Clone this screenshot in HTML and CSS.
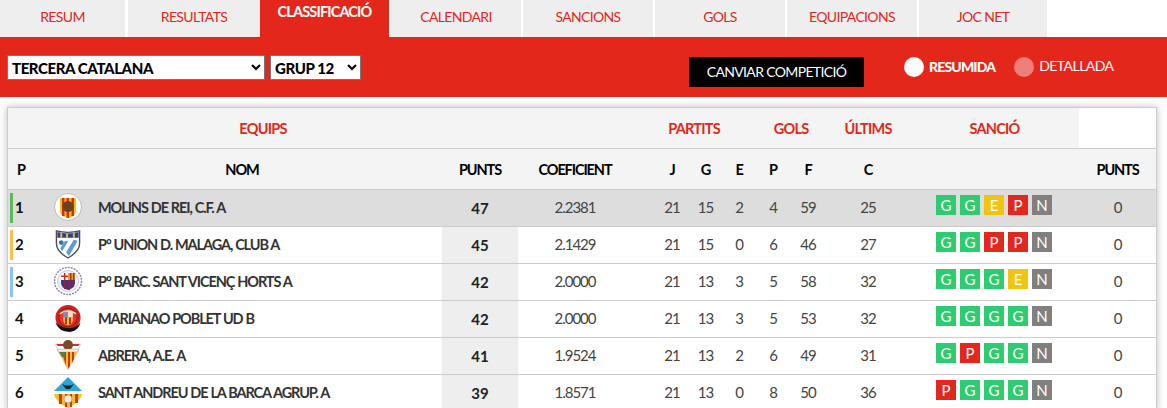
FILE: index.html
```html
<!DOCTYPE html>
<html lang="ca">
<head>
<meta charset="utf-8">
<title>Classificació</title>
<link rel="stylesheet" href="styles.css">
</head>
<body>
<nav class="tabs">
  <a class="tab t1">RESUM</a><a class="tab t2b">RESULTATS</a><a class="tab t3 active">CLASSIFICACIÓ</a><a class="tab">CALENDARI</a><a class="tab">SANCIONS</a><a class="tab">GOLS</a><a class="tab">EQUIPACIONS</a><a class="tab t4">JOC NET</a>
</nav>
<section class="filters">
  <select class="sel sel-comp"><option>TERCERA CATALANA</option></select>
  <select class="sel sel-group"><option>GRUP 12</option></select>
  <button class="change">CANVIAR COMPETICIÓ</button>
  <span class="dot on"></span><span class="mode bold">RESUMIDA</span>
  <span class="dot off"></span><span class="mode light">DETALLADA</span>
</section>
<main class="card">
<table class="standings">
  <colgroup>
    <col class="c-p"><col class="c-logo"><col class="c-name"><col class="c-pts"><col class="c-coef"><col class="c-j"><col class="c-g"><col class="c-e"><col class="c-pp"><col class="c-f"><col class="c-c"><col class="c-form"><col class="c-san">
  </colgroup>
  <thead>
    <tr class="groups">
      <th colspan="4">EQUIPS</th><th></th><th colspan="3">PARTITS</th><th colspan="2">GOLS</th><th>ÚLTIMS</th><th>SANCIÓ</th><th class="blank"></th>
    </tr>
    <tr class="heads">
      <th class="hp">P</th><th colspan="2">NOM</th><th>PUNTS</th><th>COEFICIENT</th><th class="j">J</th><th>G</th><th>E</th><th>P</th><th>F</th><th>C</th><th></th><th>PUNTS</th>
    </tr>
  </thead>
  <tbody>
    <tr class="first">
      <td class="rank"><i class="bar green"></i>1</td>
      <td class="logo"><svg width="28" height="28" viewBox="0 0 28 28"><circle cx="14" cy="14" r="13.500" fill="#fff" stroke="#bbb"/><path d="M6 5h16v13q0 5-8 7q-8-2-8-7z" fill="#f2c40f"/><path d="M8 5h2.500v18H8zM12.500 5H15v20h-2.500zM17.500 5H20v18h-2.500z" fill="#d92a1c"/><circle cx="14" cy="13.500" r="5.500" fill="#6b4120"/></svg></td>
      <td class="name">MOLINS DE REI, C.F. A</td><td class="pts">47</td><td>2.2381</td><td class="j">21</td><td>15</td><td>2</td><td>4</td><td>59</td><td>25</td>
      <td><div class="form"><b class="g">G</b><b class="g">G</b><b class="e">E</b><b class="p">P</b><b class="n">N</b></div></td><td>0</td>
    </tr>
    <tr>
      <td class="rank"><i class="bar yellow"></i>2</td>
      <td class="logo"><svg width="26" height="29" viewBox="0 0 26 30"><path d="M1 1q12 3 24 0v13q0 8-12 15Q1 22 1 14z" fill="#fff" stroke="#4a4a5a" stroke-width="1.400"/><path d="M2 2q11 3 22 0v6H2z" fill="#2b3f8c"/><path d="M5 3h2v5H5zM11 4h2v4h-2zM18 3h2v5h-2z" fill="#eabf2b"/><path d="M11 23l8-13 4 1-9 16zM5 19l5-8 3 1-6 10z" fill="#5b9bd8"/><circle cx="6" cy="13" r="2.400" fill="#3b6fb5"/></svg></td>
      <td class="name">Pº UNION D. MALAGA, CLUB A</td><td class="pts">45</td><td>2.1429</td><td class="j">21</td><td>15</td><td>0</td><td>6</td><td>46</td><td>27</td>
      <td><div class="form"><b class="g">G</b><b class="g">G</b><b class="p">P</b><b class="p">P</b><b class="n">N</b></div></td><td>0</td>
    </tr>
    <tr>
      <td class="rank"><i class="bar blue"></i>3</td>
      <td class="logo"><svg width="30" height="30" viewBox="0 0 30 30"><circle cx="15" cy="15" r="13.500" fill="#fff" stroke="#8d88b8" stroke-width="1.500" stroke-dasharray="2 1"/><circle cx="15" cy="15" r="10.500" fill="#f1f1f8" stroke="#aaa" stroke-width=".6"/><path d="M8 7h14v10q0 5-7 7q-7-2-7-7z" fill="#26408f"/><path d="M8 7h7v7H8z" fill="#fff"/><path d="M15 7h7v7h-7z" fill="#d8a21e"/><path d="M17 7h1.500v7H17zM20 7h1.500v7H20z" fill="#c8281e"/><path d="M11 14h2v9h-2zM15 14h2v10h-2zM19 14h2v7h-2z" fill="#a3173a"/><path d="M8 9.500h7v1.500H8zM11 7h1.500v7H11z" fill="#d8281e"/></svg></td>
      <td class="name">Pº BARC. SANT VICENÇ HORTS A</td><td class="pts">42</td><td>2.0000</td><td class="j">21</td><td>13</td><td>3</td><td>5</td><td>58</td><td>32</td>
      <td><div class="form"><b class="g">G</b><b class="g">G</b><b class="g">G</b><b class="e">E</b><b class="n">N</b></div></td><td>0</td>
    </tr>
    <tr>
      <td class="rank">4</td>
      <td class="logo"><svg width="28" height="29" viewBox="0 0 28 30"><circle cx="14" cy="14" r="13" fill="#c9241f"/><path d="M1 19q3 10 15 10q9-1 11-10q-4 6-12 6q-8 0-14-6z" fill="#111"/><circle cx="14" cy="14" r="9.500" fill="#ea3322" stroke="#7a1512" stroke-width=".8"/><path d="M4.800 11q9-5 18.400 0l-1-2q-8-5-16.400 0z" fill="#f1e3d4"/><path d="M9 8h5v6H9z" fill="#7c8fb3"/><path d="M14 8h5v6h-5z" fill="#f4e2c4"/><path d="M9 14h10v3q-1 4-5 5q-4-1-5-5z" fill="#f2c94a"/><path d="M11 14h2v7h-2zM15 14h2v7h-2z" fill="#c9241f"/></svg></td>
      <td class="name">MARIANAO POBLET UD B</td><td class="pts">42</td><td>2.0000</td><td class="j">21</td><td>13</td><td>3</td><td>5</td><td>53</td><td>32</td>
      <td><div class="form"><b class="g">G</b><b class="g">G</b><b class="g">G</b><b class="g">G</b><b class="n">N</b></div></td><td>0</td>
    </tr>
    <tr>
      <td class="rank">5</td>
      <td class="logo"><svg width="28" height="30" viewBox="0 0 28 30"><path d="M1 4l26 0-13 26z" fill="#fff" stroke="#c9c4bc" stroke-width=".6"/><path d="M2 4l9 0v2l-7 0zM26 4l-9 0v2l7 0z" fill="#c9352a"/><ellipse cx="14" cy="5" rx="5" ry="5" fill="#7a4a22"/><path d="M3 9h22l-1 3H4z" fill="#eee" stroke="#888" stroke-width=".4"/><path d="M4.500 12h19L14 29z" fill="#eec02b"/><path d="M14 12h2v14l-2 3zM18 12h2v7l-2 4zM8 12h4v14z" fill="#d5321f"/><path d="M5 12h6v5l-3 0z" fill="#5c7a4a"/></svg></td>
      <td class="name">ABRERA, A.E. A</td><td class="pts">41</td><td>1.9524</td><td class="j">21</td><td>13</td><td>2</td><td>6</td><td>49</td><td>31</td>
      <td><div class="form"><b class="g">G</b><b class="p">P</b><b class="g">G</b><b class="g">G</b><b class="n">N</b></div></td><td>0</td>
    </tr>
    <tr>
      <td class="rank">6</td>
      <td class="logo"><svg width="30" height="32" viewBox="0 0 30 32"><path d="M15 1L29 15H1z" fill="#29a7dc"/><path d="M9 8q6 3 12 0l-4 5h-4z" fill="#222"/><path d="M1 15h28v3H1z" fill="#fff"/><path d="M1 18h28l-1 3q-4 7-13 11Q6 28 2 21z" fill="#f0c21f"/><path d="M6 18h3v10H6zM12 18h2v13h-2zM17 18h2v13h-2zM22 18h3v9h-3z" fill="#d8322a"/><circle cx="15" cy="23" r="4" fill="#f3ede1" stroke="#777" stroke-width=".5"/></svg></td>
      <td class="name">SANT ANDREU DE LA BARCA AGRUP. A</td><td class="pts">39</td><td>1.8571</td><td class="j">21</td><td>13</td><td>0</td><td>8</td><td>50</td><td>36</td>
      <td><div class="form"><b class="p">P</b><b class="g">G</b><b class="g">G</b><b class="g">G</b><b class="n">N</b></div></td><td>0</td>
    </tr>
  </tbody>
</table>
</main>
</body>
</html>
```
FILE: styles.css
```css
* { box-sizing: border-box; }
html, body { margin: 0; height: 408px; overflow: hidden; background: #fff; }
body { font-family: "Lato", "Liberation Sans", sans-serif; color: #333; }

.tabs { display: flex; height: 37px; gap: 2px; }
.tab { background: #eee; color: #e3271b; font-size: 14px; letter-spacing: -.65px; text-align: center; line-height: 33px; width: 130px; }
.t1 { width: 125px; margin-right: 1px; }
.t2b { width: 132px; }
.t3 { width: 129px; margin-left: -2px; }
.t4 { width: 128px; }
.tab.active { background: #e3271b; color: #fff; font-weight: 700; font-size: 14.5px; letter-spacing: -.85px; line-height: 24px; }

.filters { height: 60px; background: #e3271b; display: flex; align-items: flex-start; padding: 18px 0 0 7px; }
.sel { height: 25px; font: 900 15px "Lato", sans-serif; letter-spacing: -.4px; color: #000; background: #fff; padding: 0; border: 1px solid #767676; }
.sel-comp { width: 258px; }
.sel-group { width: 91px; margin-left: 5px; }
.change { width: 175px; height: 30px; margin: 2px 0 0 328px; padding: 0 0 2px; background: #000; color: #fff; border: 0; font: 400 14px "Lato", sans-serif; letter-spacing: -.65px; }
.dot { width: 20px; height: 20px; border-radius: 50%; margin-top: 2px; }
.dot.on { background: #fff; margin-left: 40px; }
.dot.off { background: #ee7f79; margin-left: 19px; }
.mode { color: #fff; font-size: 14px; line-height: 20px; margin: 2px 0 0 5px; }
.mode.bold { font-weight: 900; letter-spacing: -.85px; }
.mode.light { letter-spacing: -.55px; margin-top: 1px; }

.card { margin: 10px 10px 0 7px; border: 1px solid #ccc; border-bottom: 0; box-shadow: 0 0 8px rgba(0,0,0,.25); }
.standings { width: 1148px; table-layout: fixed; border-collapse: separate; border-spacing: 0; font-size: 15px; }
.c-p { width: 34px; } .c-logo { width: 48px; } .c-name { width: 352px; } .c-pts { width: 76px; }
.c-coef { width: 114px; } .c-j { width: 57px; } .c-g { width: 33px; } .c-e { width: 34px; } .c-pp { width: 34px; }
.c-f { width: 36px; } .c-c { width: 84px; } .c-form { width: 169px; } .c-san { width: 77px; }

th, td { padding: 0; text-align: center; }
thead th { background: #f4f4f4; border-bottom: 1px solid #ccc; font-weight: 700; font-size: 14.5px; letter-spacing: -1.1px; }
.groups th { height: 41px; color: #e3271b; letter-spacing: -.75px; }
.groups th.blank { background: #fff; }
.heads th { height: 41px; color: #000; }
th.hp { text-align: left; padding-left: 9px; }
.j { padding-left: 23px; }

tbody td { height: 37px; padding-bottom: 2px; border-bottom: 1px solid #ccc; background: #fff; font-weight: 400; color: #444; letter-spacing: -1px; }
tbody .first td { background: #ddd; }
td.rank { text-align: left; padding-left: 7px; font-weight: 700; color: #111; position: relative; letter-spacing: 0; }
.bar { position: absolute; left: 2px; top: 3px; width: 3px; height: 30px; }
.green { background: #5cb85c; } .yellow { background: #ffc04d; } .blue { background: #8ec5f0; }
td.logo { padding-left: 4px; line-height: 0; }
td.name { text-align: left; padding-left: 8px; font-weight: 700; font-size: 14.5px; letter-spacing: -1.1px; word-spacing: .5px; color: #333; white-space: nowrap; }
tbody td.pts { background: #eee; font-weight: 700; color: #222; padding-bottom: 0; letter-spacing: 0; }
tbody .first td.pts { background: #ddd; }
.form { display: flex; gap: 4px; padding-left: 26px; margin-bottom: 4px; }
.form b { width: 20px; height: 20px; line-height: 20px; font-weight: 400; font-size: 15px; color: #fff; text-align: center; letter-spacing: 0; }
.form .g { background: #2ecc71; } .form .e { background: #f1c40f; } .form .p { background: #e3271b; } .form .n { background: #808080; }
```
